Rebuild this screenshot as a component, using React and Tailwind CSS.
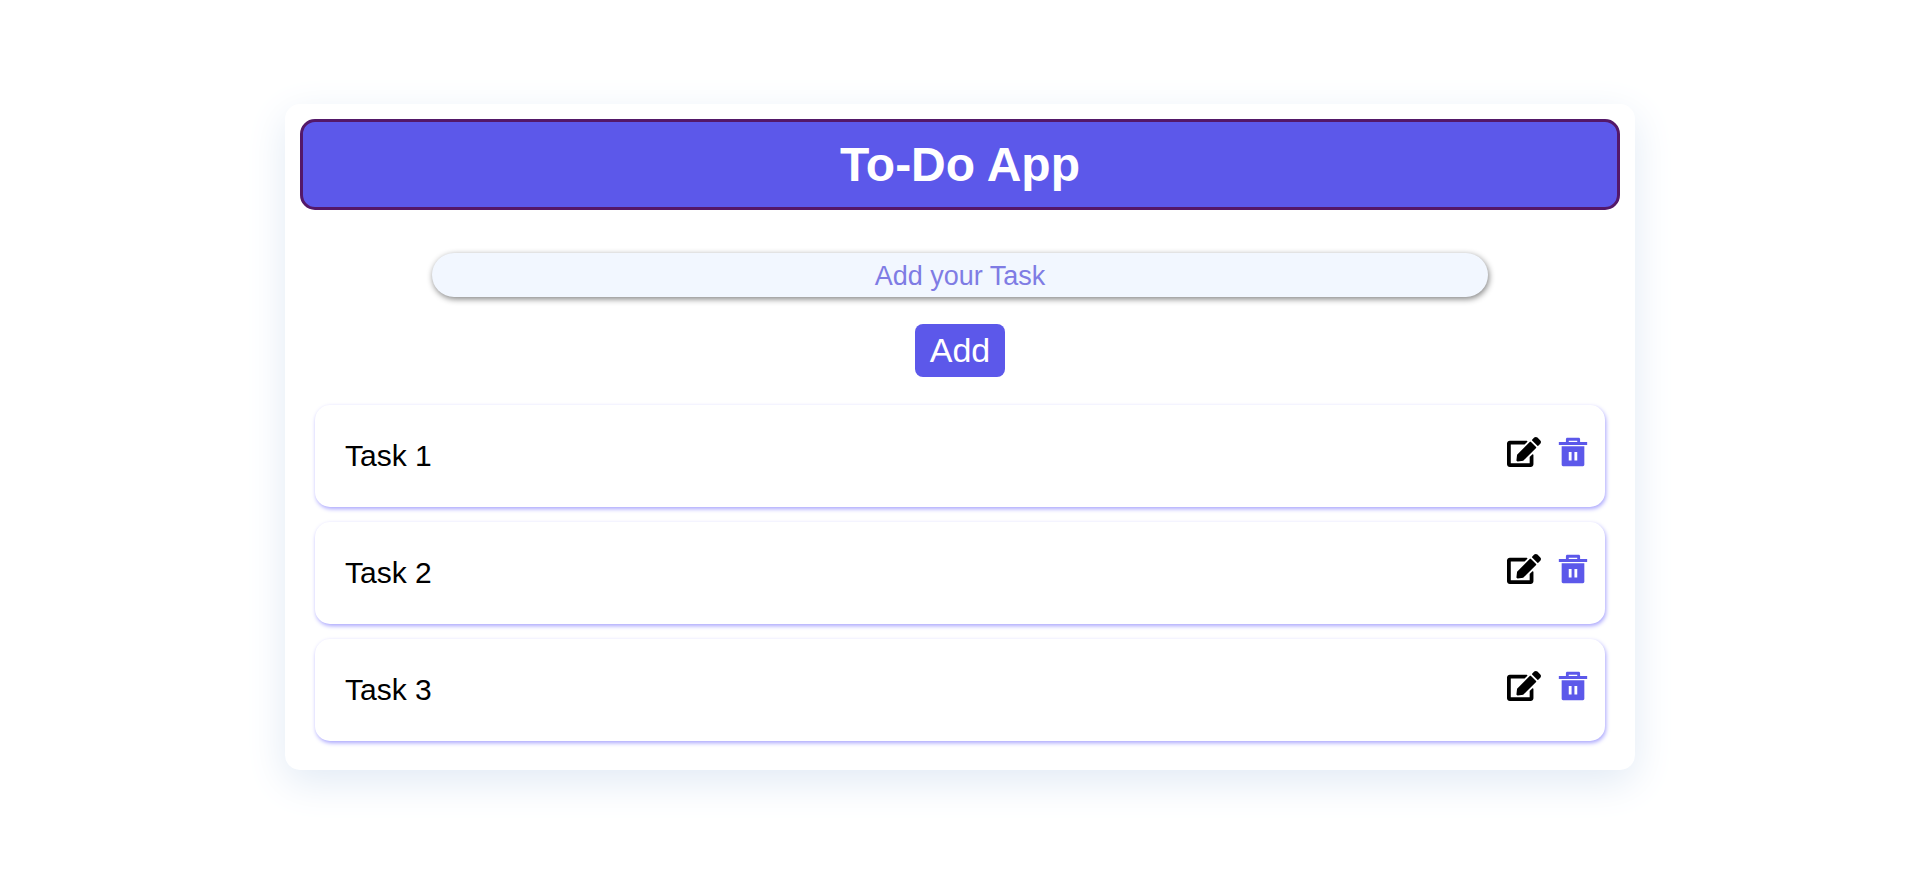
import { useState } from "react";
import { FaEdit } from "react-icons/fa";
import { RiDeleteBin5Fill } from "react-icons/ri";

const initialTasks = ["Task 1", "Task 2", "Task 3"];

function TaskItem({ name, onDelete }) {
  return (
    <li className="flex items-center justify-between rounded-[15px] bg-white py-[34px] pr-[15px] pl-[30px] shadow-[1px_2px_4px_#a8a4fd]">
      <span className="text-[30px] leading-[34px] text-black">{name}</span>
      <div className="-mt-2 flex gap-[15px]">
        <button type="button" aria-label={`Edit ${name}`} className="text-black">
          <FaEdit className="size-[34px]" />
        </button>
        <button type="button" aria-label={`Delete ${name}`} onClick={onDelete} className="text-[#5c58ea]">
          <RiDeleteBin5Fill className="size-[34px]" />
        </button>
      </div>
    </li>
  );
}

export default function App() {
  const [tasks, setTasks] = useState(initialTasks);
  const [draft, setDraft] = useState("");

  const addTask = (event) => {
    event.preventDefault();
    if (!draft.trim()) return;
    setTasks([...tasks, draft.trim()]);
    setDraft("");
  };

  return (
    <div className="px-4 pt-[104px] pb-[100px] font-['Liberation_Sans',Arial,sans-serif]">
      <main className="mx-auto max-w-[1350px] rounded-[15px] bg-white px-[15px] pt-[15px] pb-[29px] shadow-[0_12px_40px_#e1eaf5]">
        <h1 className="rounded-[15px] border-3 border-[#541868] bg-[#5c58ea] py-[15px] text-center text-[48px] leading-[55px] font-bold text-white">
          To-Do App
        </h1>
        <form onSubmit={addTask} className="mt-[43px] flex flex-col items-center gap-[27px]">
          <input
            type="text"
            aria-label="Add your Task"
            placeholder="Add your Task"
            value={draft}
            onChange={(event) => setDraft(event.target.value)}
            className="h-11 w-4/5 rounded-full bg-[#f2f7ff] px-4 pt-[3px] text-center text-[27px] leading-8 text-[#5c58ea] shadow-[1px_2px_6px_#808080] outline-none placeholder:text-[#7f7ce4]"
          />
          <button type="submit" className="rounded-lg bg-[#5c58ea] px-[15px] py-[7px] text-[34px] leading-[39px] text-white">
            Add
          </button>
        </form>
        <ul className="mx-[15px] mt-7 flex flex-col gap-[15px]">
          {tasks.map((name, index) => (
            <TaskItem key={index} name={name} onDelete={() => setTasks(tasks.filter((_, i) => i !== index))} />
          ))}
        </ul>
      </main>
    </div>
  );
}
